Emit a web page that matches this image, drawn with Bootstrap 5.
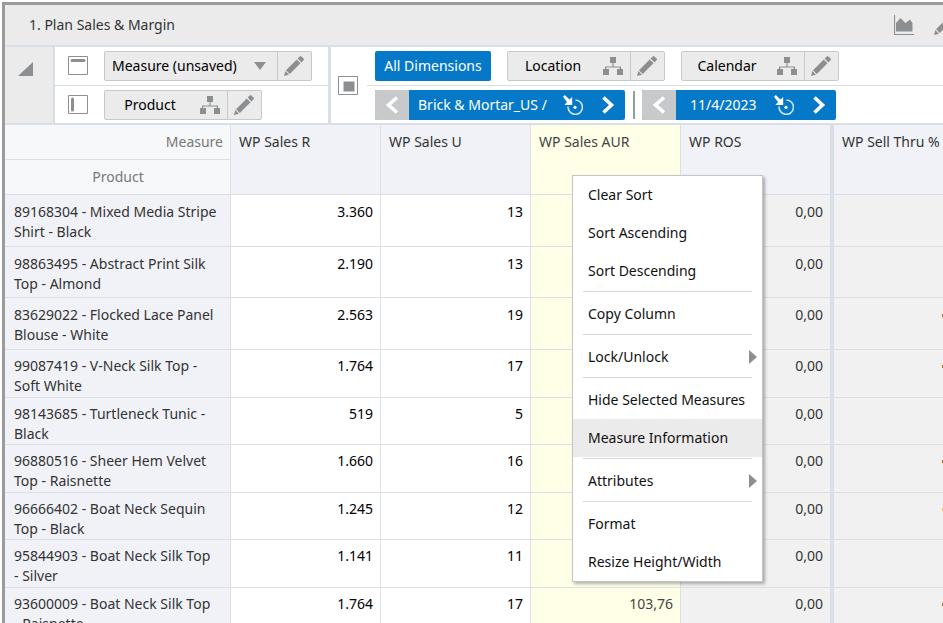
<!DOCTYPE html>
<html lang="en">
<head>
<meta charset="utf-8">
<meta name="viewport" content="width=device-width, initial-scale=1">
<title>Plan Sales &amp; Margin</title>
<link href="https://cdn.jsdelivr.net/npm/bootstrap@5.3.0/dist/css/bootstrap.min.css" rel="stylesheet">
<style>
  :root { --line: #d9dfe6; --grid-line: #dddfe2; --frame: #9b9b9b; --blue: #0579c8; --icon: #8c8f92; }
  body { font: 14px/20px "Noto Sans", "Open Sans", sans-serif; color: #333; background: #fff; }
  svg { display: block; flex: none; }
  .page-edge { padding: 2px 0 0 2px; }
  .planner { border: solid var(--frame); border-width: 3px 0 0 3px; }
  .title-bar { height: 42px; background: #ebebeb; border-bottom: 2px solid var(--line); padding-left: 24px; }
  .title-bar h1 { font-size: 14px; line-height: 20px; font-weight: 400; }
  .title-tools { gap: 20px; margin-right: -11px; }
  .plain-btn { border: 0; padding: 0; background: none; color: var(--icon); }
  .tool-area { border-bottom: 2px solid var(--line); }
  .corner-tool { width: 50px; background: #ebebeb; border-right: 2px solid var(--line); padding: 14px 0 0 13px; }
  .axis-panel { width: 276px; border-right: 3px solid var(--line); }
  .tile-row { height: 39px; padding-bottom: 1px; }
  .tile-row + .tile-row { height: 37px; padding: 1px 0 0; }
  .tile-row:first-child { border-bottom: 1px solid var(--line); }
  .axis-panel .tile-row, .axis-panel .tile-row + .tile-row { padding-left: 13px; gap: 16px; }
  .page-mark { padding: 0 9px 0 7px; }
  .page-rows .tile-row, .page-rows .tile-row + .tile-row { padding-left: 8px; }
  .tile .btn { --bs-btn-font-size: 14px; --bs-btn-line-height: 20px; --bs-btn-color: #000; --bs-btn-bg: #ebebec; --bs-btn-border-color: #c6c8ca; --bs-btn-border-radius: 2px; height: 30px; padding: 0 7px; white-space: nowrap; }
  .tile .btn-dim { width: 124px; }
  .tile .btn-dim span { padding-right: 12px; }
  .tile .btn-measure { width: 174px; padding-right: 11px; }
  .tile .btn-edit { width: 35px; padding: 0 6px; color: var(--icon); }
  .btn.btn-all { --bs-btn-font-size: 14px; --bs-btn-line-height: 20px; width: 116px; height: 30px; padding: 0; border: 0; border-radius: 2px; background: var(--blue); color: #fff; white-space: nowrap; }
  .slice { height: 30px; border-radius: 2px; background: var(--blue); color: #fff; }
  .slice .prev { width: 34px; }
  .slice .slice-text { padding-left: 9px; }
  .slice-cal .slice-text { padding-left: 14px; }
  .slice .slice-tools { gap: 18px; padding-right: 10px; }
  .slice .plain-btn { color: #fff; }
  .slice .plain-btn.prev { background: #c8c9ca; }
  .slice-loc { width: 250px; } .slice-cal { width: 194px; }
  .slice-bar { width: 2px; height: 28px; background: #999c9e; margin: 0 7px 0 8px; }
  .grid { table-layout: fixed; border-collapse: separate; border-spacing: 0; width: 100%; }
  .grid th, .grid td { font-weight: 400; vertical-align: top; padding: 7px 7px 0 8px; border: solid var(--grid-line); border-width: 0 1px 1px 0; }
  .grid td { text-align: right; color: #000; }
  .grid th { background: #f1f2f7; }
  .grid tbody th { padding-left: 9px; padding-right: 4px; }
  .grid thead th { white-space: nowrap; }
  .grid .axis-name { background: #f7f8fa; color: #777; height: 35px; }
  .grid .sel { background: #ffffe7; color: #444; }
  .grid td.locked { background: #f1f1f1; color: #333; }
  .grid .col-end { border-right: 4px solid var(--line); }
  .grid .last-cell { border-right: 0; padding-right: 0; }
  .grid .tall:nth-child(odd) { height: 52px; }
  .grid .tall:nth-child(even) { height: 51px; }
  .grid .short th, .grid .short td { padding-top: 6px; }
  .grid .short:nth-child(odd) { height: 47px; }
  .grid .short:nth-child(even) { height: 48px; }
  .flag { display: block; width: 1px; height: 3px; margin: 9px 0 0 auto; background: #b5651d; }
  .flag.warn { background: #f0b45a; }
  .grid-menu.dropdown-menu { top: 175px; left: 572px; width: 191px; --bs-dropdown-font-size: 14px; --bs-dropdown-padding-y: 0; --bs-dropdown-border-radius: 0; --bs-dropdown-border-color: #c3c5c8; --bs-dropdown-link-color: #111; --bs-dropdown-link-hover-bg: #ebebec; --bs-dropdown-link-hover-color: #111; color: #111; box-shadow: 2px 2px 3px rgba(0,0,0,.3); }
  .grid-menu .dropdown-item { height: 38px; padding: 0 5px 0 15px; }
  .grid-menu .dropdown-item.current { background: #ebebec; }
  .grid-menu .dropdown-divider { margin: 1px 10px 3px; border-color: #d5d8db; opacity: 1; }
</style>
<script src="https://cdn.jsdelivr.net/npm/bootstrap@5.3.0/dist/js/bootstrap.bundle.min.js"></script>
</head>
<body class="vh-100 overflow-hidden">
<svg class="d-none" aria-hidden="true">
  <symbol id="i-pencil" viewBox="0 0 20 20"><path fill="currentColor" d="M0 20l1.300-5 3.700 3.700zM2 14.200L12.700 3.500l3.800 3.800L5.800 18zM13.600 2.600L15.800.4q.8-.7 1.600 0l2.200 2.200q.7.800 0 1.600l-2.200 2.200z"/></symbol>
  <symbol id="i-tree" viewBox="0 0 20 18"><path fill="currentColor" d="M7 0h6v6h-2.400v3.400H18V12h2v6h-6v-6h2.700v-1.400H3.300V12H6v6H0v-6h2V9.400h7.400V6H7z"/></symbol>
  <symbol id="i-left" viewBox="0 0 14 18"><path fill="none" stroke="currentColor" stroke-width="3.600" d="M12 1.500L3.500 9l8.500 7.500"/></symbol>
  <symbol id="i-right" viewBox="0 0 14 18"><path fill="none" stroke="currentColor" stroke-width="3.600" d="M2.500 1.500L10.500 9l-8 7.500"/></symbol>
  <symbol id="i-target" viewBox="0 0 20 20"><path fill="none" stroke="currentColor" stroke-width="1.600" stroke-opacity=".8" d="M5.100 11.500A7.200 7.200 0 1 0 12.500 5"/><circle cx="12" cy="12.300" r="1.600" fill="currentColor"/><path fill="currentColor" d="M0 1.800L1.800 0l4.700 4.500L9.200 2v8H1.400L4 7z"/></symbol>
</svg>
<div class="page-edge h-100">
<main class="planner h-100 overflow-hidden">
  <header class="title-bar d-flex align-items-center justify-content-between">
    <h1 class="m-0">1. Plan Sales &amp; Margin</h1>
    <div class="title-tools d-flex align-items-center">
      <button class="plain-btn" type="button" aria-label="Chart view"><svg width="20" height="20" viewBox="0 0 20 20"><path d="M.5 0v19.500H20" fill="none" stroke="currentColor" stroke-width="1.200"/><path fill="currentColor" d="M2 16.500V8l4.500-5 5 5L16 4.500l2.500 3.500v8.500z"/></svg></button>
      <button class="plain-btn" type="button" aria-label="Edit view"><svg width="20" height="20"><use href="#i-pencil"/></svg></button>
    </div>
  </header>

  <section class="tool-area d-flex">
    <div class="corner-tool flex-shrink-0"><button class="plain-btn" type="button" aria-label="Collapse layout tiles"><svg width="15" height="14" viewBox="0 0 15 14"><path fill="currentColor" d="M15 0v14H0z"/></svg></button></div>
    <div class="axis-panel flex-shrink-0">
      <div class="tile-row d-flex align-items-center">
        <svg width="20" height="20" viewBox="0 0 20 20"><path fill="#fff" stroke="#8c8f92" d="M.5.5h19v18H.5z"/><path stroke="#8c8f92" stroke-width="3" stroke-linecap="round" d="M4 4.500h12"/></svg>
        <div class="tile btn-group">
          <button class="btn btn-measure d-flex align-items-center justify-content-between" type="button">Measure (unsaved)<svg width="12" height="8" viewBox="0 0 12 8"><path fill="#8c8f92" d="M0 0h12L6 8z"/></svg></button>
          <button class="btn btn-edit" type="button" aria-label="Edit measure"><svg width="20" height="20"><use href="#i-pencil"/></svg></button>
        </div>
      </div>
      <div class="tile-row d-flex align-items-center">
        <svg width="20" height="20" viewBox="0 0 20 20"><path fill="#fff" stroke="#8c8f92" d="M.5.5h19v18H.5z"/><path stroke="#8c8f92" stroke-width="3" stroke-linecap="round" d="M4.500 4v11"/></svg>
        <div class="tile btn-group">
          <button class="btn btn-dim d-flex align-items-center" type="button"><span class="flex-grow-1">Product</span><svg width="20" height="18" color="#8c8f92"><use href="#i-tree"/></svg></button>
          <button class="btn btn-edit" type="button" aria-label="Edit product"><svg width="20" height="20"><use href="#i-pencil"/></svg></button>
        </div>
      </div>
    </div>
    <div class="page-mark d-flex align-items-center"><svg width="20" height="19" viewBox="0 0 20 19"><path fill="#fff" stroke="#8c8f92" d="M.5.5h19v18H.5z"/><path fill="#8c8f92" d="M5.500 5.500h11v10h-11z"/></svg></div>
    <div class="page-rows flex-grow-1">
      <div class="tile-row d-flex align-items-center gap-3">
        <button class="btn btn-all" type="button">All Dimensions</button>
        <div class="tile btn-group">
          <button class="btn btn-dim d-flex align-items-center" type="button"><span class="flex-grow-1">Location</span><svg width="20" height="18" color="#8c8f92"><use href="#i-tree"/></svg></button>
          <button class="btn btn-edit" type="button" aria-label="Edit location"><svg width="20" height="20"><use href="#i-pencil"/></svg></button>
        </div>
        <div class="tile btn-group">
          <button class="btn btn-dim d-flex align-items-center" type="button"><span class="flex-grow-1">Calendar</span><svg width="20" height="18" color="#8c8f92"><use href="#i-tree"/></svg></button>
          <button class="btn btn-edit" type="button" aria-label="Edit calendar"><svg width="20" height="20"><use href="#i-pencil"/></svg></button>
        </div>
      </div>
      <div class="tile-row d-flex align-items-center">
        <div class="slice slice-loc d-flex align-items-center overflow-hidden">
          <button class="plain-btn prev h-100 d-flex align-items-center justify-content-center" type="button" aria-label="Previous location"><svg width="14" height="18"><use href="#i-left"/></svg></button>
          <span class="slice-text flex-grow-1 text-nowrap">Brick &amp; Mortar_US /</span>
          <div class="slice-tools d-flex align-items-center">
            <button class="plain-btn" type="button" aria-label="Select location"><svg width="20" height="20"><use href="#i-target"/></svg></button>
            <button class="plain-btn" type="button" aria-label="Next location"><svg width="14" height="18"><use href="#i-right"/></svg></button>
          </div>
        </div>
        <div class="slice-bar"></div>
        <div class="slice slice-cal d-flex align-items-center overflow-hidden">
          <button class="plain-btn prev h-100 d-flex align-items-center justify-content-center" type="button" aria-label="Previous week"><svg width="14" height="18"><use href="#i-left"/></svg></button>
          <span class="slice-text flex-grow-1 text-nowrap">11/4/2023</span>
          <div class="slice-tools d-flex align-items-center">
            <button class="plain-btn" type="button" aria-label="Select week"><svg width="20" height="20"><use href="#i-target"/></svg></button>
            <button class="plain-btn" type="button" aria-label="Next week"><svg width="14" height="18"><use href="#i-right"/></svg></button>
          </div>
        </div>
      </div>
    </div>
  </section>

  <table class="grid">
    <colgroup><col width="226"><col width="150"><col width="150"><col width="150"><col width="153"><col></colgroup>
    <thead>
      <tr><th class="axis-name text-end" scope="col">Measure</th><th rowspan="2" scope="col">WP Sales R</th><th rowspan="2" scope="col">WP Sales U</th><th rowspan="2" scope="col" class="sel">WP Sales AUR</th><th rowspan="2" scope="col" class="col-end">WP ROS</th><th rowspan="2" scope="col" class="last-cell">WP Sell Thru %</th></tr>
      <tr><th class="axis-name text-center" scope="col">Product</th></tr>
    </thead>
    <tbody>
      <tr class="tall"><th scope="row">89168304 - Mixed Media Stripe Shirt - Black</th><td>3.360</td><td>13</td><td class="sel"></td><td class="locked col-end">0,00</td><td class="locked last-cell"></td></tr>
      <tr class="tall"><th scope="row">98863495 - Abstract Print Silk Top - Almond</th><td>2.190</td><td>13</td><td class="sel"></td><td class="locked col-end">0,00</td><td class="locked last-cell"></td></tr>
      <tr class="tall"><th scope="row">83629022 - Flocked Lace Panel Blouse - White</th><td>2.563</td><td>19</td><td class="sel"></td><td class="locked col-end">0,00</td><td class="locked last-cell"><span class="flag"></span></td></tr>
      <tr class="short"><th scope="row">99087419 - V-Neck Silk Top - Soft&nbsp;White</th><td>1.764</td><td>17</td><td class="sel"></td><td class="locked col-end">0,00</td><td class="locked last-cell"><span class="flag"></span></td></tr>
      <tr class="short"><th scope="row">98143685 - Turtleneck Tunic - Black</th><td>519</td><td>5</td><td class="sel"></td><td class="locked col-end">0,00</td><td class="locked last-cell"></td></tr>
      <tr class="short"><th scope="row">96880516 - Sheer Hem Velvet Top - Raisnette</th><td>1.660</td><td>16</td><td class="sel"></td><td class="locked col-end">0,00</td><td class="locked last-cell"><span class="flag"></span></td></tr>
      <tr class="short"><th scope="row">96666402 - Boat Neck Sequin Top - Black</th><td>1.245</td><td>12</td><td class="sel"></td><td class="locked col-end">0,00</td><td class="locked last-cell"><span class="flag warn"></span></td></tr>
      <tr class="short"><th scope="row">95844903 - Boat Neck Silk Top <span class="text-nowrap">- Silver</span></th><td>1.141</td><td>11</td><td class="sel"></td><td class="locked col-end">0,00</td><td class="locked last-cell"></td></tr>
      <tr class="short"><th scope="row">93600009 - Boat Neck Silk Top <span class="text-nowrap">- Raisnette</span></th><td>1.764</td><td>17</td><td class="sel">103,76</td><td class="locked col-end">0,00</td><td class="locked last-cell"><span class="flag"></span></td></tr>
    </tbody>
  </table>
</main>
</div>

<div class="dropdown-menu show grid-menu" role="menu">
  <button class="dropdown-item" type="button" role="menuitem">Clear Sort</button>
  <button class="dropdown-item" type="button" role="menuitem">Sort Ascending</button>
  <button class="dropdown-item" type="button" role="menuitem">Sort Descending</button>
  <hr class="dropdown-divider">
  <button class="dropdown-item" type="button" role="menuitem">Copy Column</button>
  <hr class="dropdown-divider">
  <button class="dropdown-item d-flex align-items-center justify-content-between" type="button" role="menuitem">Lock/Unlock<svg width="8" height="14" viewBox="0 0 8 14"><path fill="#8c8f92" d="M0 0l8 7-8 7z"/></svg></button>
  <hr class="dropdown-divider">
  <button class="dropdown-item" type="button" role="menuitem">Hide Selected Measures</button>
  <button class="dropdown-item current" type="button" role="menuitem">Measure Information</button>
  <hr class="dropdown-divider">
  <button class="dropdown-item d-flex align-items-center justify-content-between" type="button" role="menuitem">Attributes<svg width="8" height="14" viewBox="0 0 8 14"><path fill="#8c8f92" d="M0 0l8 7-8 7z"/></svg></button>
  <hr class="dropdown-divider">
  <button class="dropdown-item" type="button" role="menuitem">Format</button>
  <button class="dropdown-item" type="button" role="menuitem">Resize Height/Width</button>
</div>
</body>
</html>
